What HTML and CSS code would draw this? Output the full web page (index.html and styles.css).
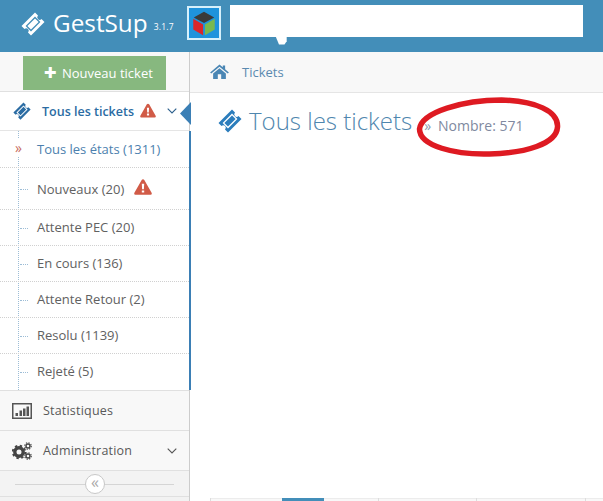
FILE: index.html
```html
<!DOCTYPE html>
<html lang="fr">
<head>
<meta charset="utf-8">
<title>GestSup</title>
<link rel="stylesheet" href="styles.css">
</head>
<body>
<svg class="defs" width="0" height="0">
  <symbol id="ticket" viewBox="0 0 24 24">
    <path fill-rule="evenodd" d="M14 0.500 L17 3.500 A2.300 2.300 0 0 0 20.500 7 L23.500 10 L10 23.500 L7 20.500 A2.300 2.300 0 0 0 3.500 17 L0.500 14 Z M14 4.600 L4.600 14 L10 19.400 L19.400 10 Z M14 6.400 L17.600 10 L10 17.600 L6.400 14 Z"/>
  </symbol>
  <symbol id="warn" viewBox="0 0 18 16">
    <path fill-rule="evenodd" d="M9 0.300 Q9.800 0.300 10.300 1.100 L17.600 13.800 Q18.300 15.600 16.600 15.800 L1.400 15.800 Q-0.300 15.600 0.400 13.800 L7.700 1.100 Q8.200 0.300 9 0.300 Z M7.800 4.800 L8.100 10.200 L9.900 10.200 L10.200 4.800 Z M7.800 11.400 L7.800 13.600 L10.200 13.600 L10.200 11.400 Z"/>
  </symbol>
  <symbol id="chev" viewBox="0 0 10 6">
    <path d="M0.700 0.700 L5 5 L9.300 0.700" fill="none" stroke="currentColor" stroke-width="1.100"/>
  </symbol>
</svg>
<header class="top">
  <svg class="logo-ticket"><use href="#ticket"/></svg>
  <span class="brand">GestSup</span>
  <small class="version">3.1.7</small>
  <span class="cube">
    <svg width="28" height="28" viewBox="0 0 30 30">
      <path d="M15 3 L26 9 L15 15 L4 9 Z" fill="#3a3a3a"/>
      <path d="M3.500 10.500 L14 16.500 L14 28 L3.500 22 Z" fill="#d9262b"/>
      <path d="M26.500 10.500 L16 16.500 L16 28 L26.500 22 Z" fill="#79b94f"/>
    </svg>
  </span>
  <div class="searchbox"></div>
</header>
<div class="layout">
  <aside class="side">
    <div class="new-wrap"><button class="new-btn"><span class="plus">✚</span>Nouveau ticket</button></div>
    <div class="menu-head">
      <svg class="head-ticket"><use href="#ticket"/></svg>
      <span class="head-label">Tous les tickets</span>
      <svg class="warn head-warn"><use href="#warn"/></svg>
      <svg class="chev chev-blue"><use href="#chev"/></svg>
      <span class="notch"></span>
    </div>
    <ul class="sub">
      <li class="item active h37"><span class="raquo">»</span>Tous les états (1311)</li>
      <li class="item h42">Nouveaux (20)<svg class="warn item-warn"><use href="#warn"/></svg></li>
      <li class="item h36">Attente PEC (20)</li>
      <li class="item h36">En cours (136)</li>
      <li class="item h36">Attente Retour (2)</li>
      <li class="item h36">Resolu (1139)</li>
      <li class="item h36 last">Rejeté (5)</li>
    </ul>
    <div class="nav-row">
      <svg class="nav-icon" viewBox="0 0 20 18">
        <path fill-rule="evenodd" fill="#555" d="M0 1 H20 V17 H0 Z M1.500 2.500 V15.500 H18.500 V2.500 Z"/>
        <path fill="#555" d="M3.500 11 H6 V14 H3.500 Z M7.500 8.500 H10 V14 H7.500 Z M11 6.500 H13.500 V14 H11 Z M14.500 4.500 H17 V14 H14.500 Z"/>
      </svg>
      <span>Statistiques</span>
    </div>
    <div class="nav-row">
      <svg class="nav-icon" viewBox="0 0 20 18">
        <g fill="none" stroke="#444">
          <circle cx="7" cy="10" r="4.200" stroke-width="3.400"/>
          <circle cx="7" cy="10" r="6.300" stroke-width="1.800" stroke-dasharray="2.400 2.550"/>
          <circle cx="16" cy="4" r="2" stroke-width="1.400"/>
          <circle cx="16" cy="4" r="3.300" stroke-width="1.100" stroke-dasharray="1.300 1.300"/>
          <circle cx="16" cy="14" r="2" stroke-width="1.400"/>
          <circle cx="16" cy="14" r="3.300" stroke-width="1.100" stroke-dasharray="1.300 1.300"/>
        </g>
      </svg>
      <span>Administration</span>
      <svg class="chev chev-grey"><use href="#chev"/></svg>
    </div>
    <div class="collapse">
      <span class="collapse-btn">«</span>
    </div>
    <div class="side-rest"></div>
  </aside>
  <main class="main">
    <div class="crumbs">
      <svg class="home" viewBox="0 0 20 16">
        <path fill="#4a86b4" d="M10 0.500 L13.500 3.500 V1.500 H16 V5.700 L20 9 L18.800 10.200 L10 3 L1.200 10.200 L0 9 Z M3.200 10 L10 4.500 L16.800 10 V16 H11.800 V11 H8.200 V16 H3.200 Z"/>
      </svg>
      <span class="crumb">Tickets</span>
    </div>
    <div class="title-row">
      <svg class="title-ticket"><use href="#ticket"/></svg>
      <h1 class="title">Tous les tickets</h1>
      <span class="count"><span class="count-quo">»</span>Nombre: 571</span>
      <svg class="ellipse" viewBox="0 0 146 62">
        <path d="M4 33 C6 16 48 4 86 4 C120 5 143 15 142 31 C141 48 110 57 74 58 C40 59 4 50 4 33 Z" fill="none" stroke="#de1a22" stroke-width="5.500"/>
      </svg>
    </div>
    <div class="spacer"></div>
    <div class="table-top">
      <span class="tab-bar"></span>
      <span class="tick t1"></span>
      <span class="tick t2"></span>
      <span class="tick t3"></span>
      <span class="tick t4"></span>
    </div>
  </main>
</div>
</body>
</html>
```
FILE: styles.css
```css
* { box-sizing: border-box; }
html, body { margin: 0; padding: 0; }
body {
  width: 603px;
  height: 501px;
  overflow: hidden;
  background: #fff;
  font-family: "Open Sans", "Noto Sans", sans-serif;
  font-size: 13px;
  color: #555;
}
.defs { position: absolute; }
.top {
  height: 52px;
  background: #438eb9;
  display: flex;
  align-items: center;
  color: #fff;
}
.logo-ticket { width: 24px; height: 24px; fill: #fff; margin-left: 21px; margin-top: -5px; }
.brand { font-size: 24.300px; margin-left: 8px; line-height: 28px; margin-top: -7px; }
.version { font-size: 8.500px; margin-left: 6px; letter-spacing: 0.200px; }
.cube {
  width: 34px;
  height: 34px;
  margin-left: 13px;
  margin-top: -7px;
  border: 2px solid #d7f0fb;
  background: #1f93dc;
  display: flex;
  align-items: center;
  justify-content: center;
}
.searchbox {
  position: relative;
  width: 353px;
  height: 32px;
  margin-left: 9px;
  margin-top: -11px;
  background: #fff;
}
.searchbox::after {
  content: "";
  position: absolute;
  left: 46px;
  bottom: -8px;
  width: 11px;
  height: 8px;
  background: #fff;
  clip-path: polygon(0 0, 100% 0, 100% 60%, 80% 100%, 30% 100%);
}
.layout { display: flex; height: 449px; }
.side {
  width: 190px;
  flex: none;
  background: #f2f2f2;
  border-right: 1px solid #ccc;
  display: flex;
  flex-direction: column;
}
.new-wrap {
  height: 40px;
  background: #f8f8f8;
  border-bottom: 1px solid #e0e0e0;
  padding: 4px 0 0 23px;
}
.new-btn {
  width: 143px;
  height: 34px;
  padding: 0 0 0 21px;
  border: 0;
  background: #87b87f;
  color: #fff;
  font: 400 13px "Open Sans", sans-serif;
  display: flex;
  align-items: center;
}
.plus { font-size: 15px; margin-right: 5px; margin-top: -2px; }
.menu-head {
  position: relative;
  height: 39px;
  background: #fff;
  border-bottom: 1px solid #e5e5e5;
  display: flex;
  align-items: center;
  font-weight: 600;
  font-size: 12.500px;
  color: #2b6ca3;
}
.head-ticket { width: 18px; height: 18px; fill: #2b6ca3; margin-left: 13px; }
.head-label { margin-left: 11px; white-space: nowrap; }
.warn { fill: #d15b47; }
.head-warn { width: 16px; height: 15px; margin-left: 6px; margin-top: -2px; }
.chev { width: 10px; height: 6px; }
.chev-blue { color: #2b5f8c; margin-left: 11px; }
.notch {
  position: absolute;
  right: -2px;
  top: 10px;
  width: 11px;
  height: 23px;
  background: #3b7fb5;
  clip-path: polygon(100% 0, 0 50%, 100% 100%);
}
.sub {
  position: relative;
  list-style: none;
  margin: 0 -2px 0 0;
  padding: 0;
  background: #fff;
  border-right: 2px solid #3b7fb5;
}
.sub::before {
  content: "";
  position: absolute;
  left: 18px;
  top: 0;
  bottom: 0;
  border-left: 1px dotted #9dbdd6;
}
.item {
  position: relative;
  display: flex;
  align-items: center;
  padding-left: 37px;
  border-bottom: 1px dotted #d0d0d0;
  font-size: 13px;
  color: #616161;
  white-space: nowrap;
}
.item::before {
  content: "";
  position: absolute;
  left: 20px;
  top: 50%;
  width: 8px;
  border-top: 1px dotted #9dbdd6;
}
.h36 { height: 36px; padding-bottom: 2px; }
.h37 { height: 37px; }
.h42 { height: 42px; }
.last { border-bottom: 0; }
.active { color: #4c7fae; }
.active::before { display: none; }
.raquo {
  position: absolute;
  left: 15px;
  top: 8px;
  background: #fff;
  color: #c86c5d;
  font-size: 14px;
  line-height: 18px;
}
.item-warn { width: 18px; height: 16px; margin-left: 10px; margin-top: -3px; }
.nav-row {
  height: 40px;
  border-top: 1px solid #e0e0e0;
  background: #f8f8f8;
  display: flex;
  align-items: center;
  color: #585858;
  font-size: 12.500px;
  letter-spacing: 0.200px;
}
.nav-row span { margin-left: 11px; }
.nav-icon { width: 20px; height: 18px; margin-left: 12px; }
.chev-grey { color: #555; margin-left: 35px; }
.collapse {
  position: relative;
  height: 27px;
  background: #f3f3f3;
  border-top: 1px solid #e0e0e0;
  border-bottom: 1px solid #e0e0e0;
  display: flex;
  align-items: center;
  justify-content: center;
}
.collapse::before {
  content: "";
  position: absolute;
  left: 15px;
  right: 15px;
  top: 13px;
  border-top: 1px solid #d5d5d5;
}
.collapse-btn {
  position: relative;
  width: 20px;
  height: 20px;
  margin-left: 1px;
  border: 1px solid #c8c8c8;
  border-radius: 50%;
  background: #fff;
  color: #aaa;
  font-size: 16px;
  line-height: 15px;
  text-align: center;
}
.side-rest { flex: 1; background: #f2f2f2; }
.main { flex: 1; display: flex; flex-direction: column; min-width: 0; }
.crumbs {
  height: 41px;
  flex: none;
  background: #f8f8f8;
  border-bottom: 1px solid #e5e5e5;
  display: flex;
  align-items: center;
  padding-left: 20px;
}
.home { width: 19px; height: 15px; margin-top: -2px; }
.crumb { margin-left: 13px; color: #5a8ab0; font-size: 13px; margin-top: -1px; }
.title-row {
  position: relative;
  display: flex;
  align-items: center;
  height: 40px;
  margin-top: 8px;
  padding-left: 28px;
  color: #4a82ab;
}
.title-ticket { width: 24px; height: 24px; fill: #2b7dbc; }
.title { margin: 0 0 0 7px; font-size: 24px; font-weight: 300; line-height: 32px; white-space: nowrap; color: #4f86ae; }
.count { margin-left: 12px; margin-top: 9px; color: #8089a0; font-size: 14px; white-space: nowrap; }
.count-quo { margin-right: 7px; color: #8a9ab0; }
.ellipse { position: absolute; left: 224px; top: -5px; width: 149px; height: 62px; }
.spacer { flex: 1; }
.table-top {
  position: relative;
  height: 3px;
  flex: none;
  margin-left: 20px;
  border-top: 1px solid #ececec;
  background: #f8f8f8;
}
.tab-bar { position: absolute; left: 72px; top: -1px; width: 42px; height: 3px; background: #438eb9; }
.tick { position: absolute; top: -1px; height: 3px; width: 1px; background: #ddd; }
.t1 { left: 0; }
.t2 { left: 168px; }
.t3 { left: 266px; }
.t4 { left: 375px; }
```
